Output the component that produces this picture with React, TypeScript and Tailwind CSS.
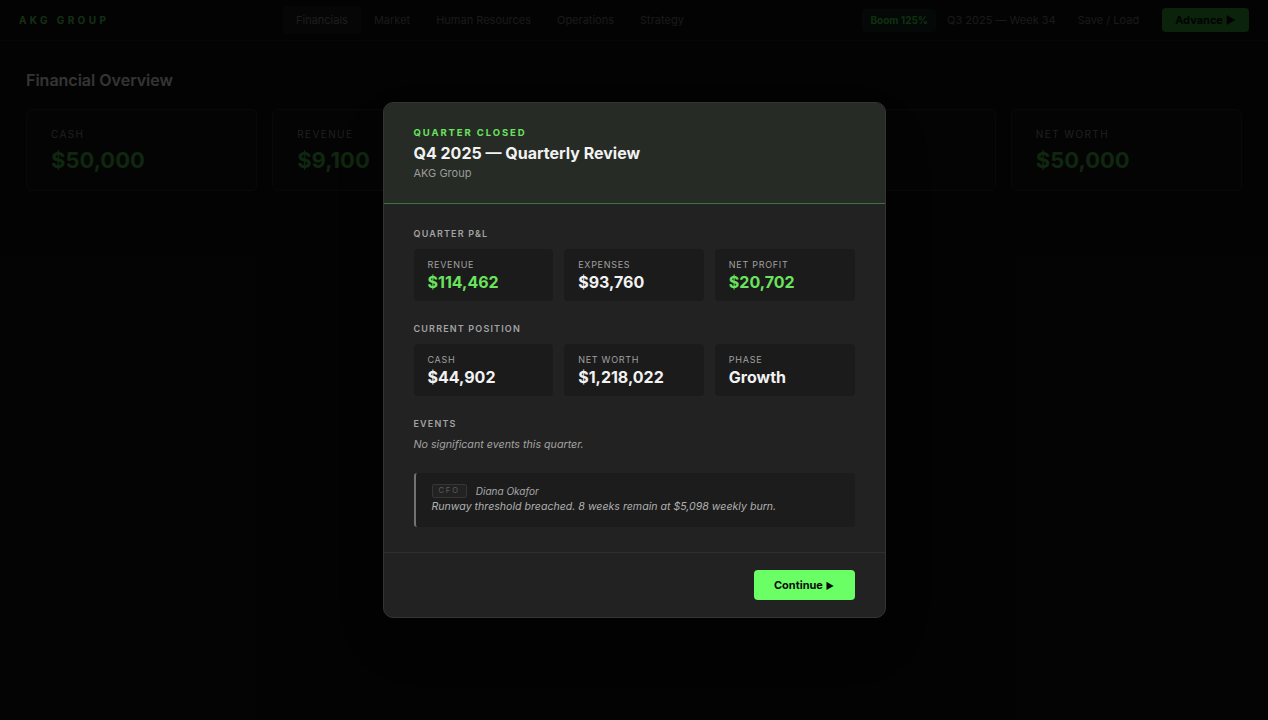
const NAV = ['Financials', 'Market', 'Human Resources', 'Operations', 'Strategy']

// cards 3 and 4 sit under the modal, so they carry no text
const TOP_CARDS = [
  { label: 'CASH', value: '$50,000' },
  { label: 'REVENUE', value: '$9,100' },
  { label: '', value: '' },
  { label: '', value: '' },
  { label: 'NET WORTH', value: '$50,000' },
]

const PNL = [
  { label: 'REVENUE', value: '$114,462', green: true },
  { label: 'EXPENSES', value: '$93,760', green: false },
  { label: 'NET PROFIT', value: '$20,702', green: true },
]

const POSITION = [
  { label: 'CASH', value: '$44,902' },
  { label: 'NET WORTH', value: '$1,218,022' },
  { label: 'PHASE', value: 'Growth' },
]

function StatBox({ label, value, green }: { label: string; value: string; green?: boolean }) {
  return (
    <div className="rounded-[4px] bg-[#1b1b1b] px-[14px] py-[9px]">
      <div className="text-[9px] leading-[14px] tracking-[0.08em] text-[#a0a0a0]">{label}</div>
      <div className={`text-[16px] font-bold leading-[20px] ${green ? 'text-[#6ae35e]' : 'text-[#f2f2f2]'}`}>
        {value}
      </div>
    </div>
  )
}

function SectionLabel({ children }: { children: React.ReactNode }) {
  return (
    <div className="text-[9px] font-semibold leading-[15px] tracking-[0.13em] text-[#a3a3a3]">{children}</div>
  )
}

export default function App() {
  return (
    <div className="relative h-[720px] w-full overflow-hidden bg-[#0e0e0e] font-['Inter',sans-serif]">
      {/* Page underneath */}
      <header className="flex h-[41px] items-center border-b border-[#1c1c1c] bg-[#0e0e0e] px-[19px]">
        <div className="w-[264px] text-[10px] font-bold tracking-[0.34em] text-[#4fbf4f]">AKG GROUP</div>
        <nav className="flex items-center">
          {NAV.map((n, i) => (
            <div
              key={n}
              className={`rounded-[4px] px-[13px] py-[6px] text-[11px] ${
                i === 0 ? 'bg-[#181818] text-[#747474]' : 'text-[#646464]'
              }`}
            >
              {n}
            </div>
          ))}
        </nav>
        <div className="ml-auto flex items-center">
          <div className="rounded-[4px] bg-[#11221a] px-[8px] py-[4px] text-[10px] font-bold text-[#3fbf3f]">
            Boom 125%
          </div>
          <div className="ml-[11px] text-[11px] text-[#646464]">Q3 2025 — Week 34</div>
          <div className="ml-[22px] text-[11px] text-[#646464]">Save / Load</div>
          <button className="ml-[23px] rounded-[4px] bg-[#2a8a2a] px-[13px] py-[4px] text-[11px] font-bold text-[#0a0a0a]">
            Advance ▶
          </button>
        </div>
      </header>

      <main className="px-[26px] pt-[27px]">
        <h1 className="text-[16px] font-semibold leading-[24px] text-[#cfcfcf]">Financial Overview</h1>
        <div className="mt-[17px] grid grid-cols-5 gap-[15px]">
          {TOP_CARDS.map((c, i) => (
            <div key={i} className="h-[82px] rounded-[6px] border border-[#242424] bg-[#121212] px-[24px] pt-[17px]">
              <div className="h-[14px] text-[10px] leading-[14px] tracking-[0.14em] text-[#7a7a7a]">{c.label}</div>
              <div className="mt-[4px] h-[30px] text-[22px] font-bold leading-[30px] text-[#3e9a3e]">{c.value}</div>
            </div>
          ))}
        </div>
      </main>

      {/* Overlay */}
      <div className="absolute inset-0 flex items-center justify-center bg-black/75">
        <div className="w-[503px] overflow-hidden rounded-[10px] border border-[#343434] bg-[#222222] shadow-2xl">
          <div className="border-b border-[#3d7340] bg-[#262b26] px-[30px] py-[22px]">
            <div className="text-[9.5px] font-bold leading-[15px] tracking-[0.2em] text-[#6ae35e]">QUARTER CLOSED</div>
            <div className="mt-[1px] text-[16px] font-bold leading-[24px] text-[#f2f2f2]">
              Q4 2025 — Quarterly Review
            </div>
            <div className="text-[11px] leading-[16px] text-[#9a9a9a]">AKG Group</div>
          </div>

          <div className="border-b border-[#2f2f2f] px-[30px] pb-[25px] pt-[22px]">
            <SectionLabel>QUARTER P&amp;L</SectionLabel>
            <div className="mt-[8px] grid grid-cols-3 gap-[11px]">
              {PNL.map((s) => (
                <StatBox key={s.label} {...s} />
              ))}
            </div>

            <div className="mt-[20px]">
              <SectionLabel>CURRENT POSITION</SectionLabel>
            </div>
            <div className="mt-[8px] grid grid-cols-3 gap-[11px]">
              {POSITION.map((s) => (
                <StatBox key={s.label} {...s} />
              ))}
            </div>

            <div className="mt-[20px]">
              <SectionLabel>EVENTS</SectionLabel>
            </div>
            <div className="mt-[5px] text-[10.7px] italic leading-[18px] text-[#a3a3a3]">
              No significant events this quarter.
            </div>

            <div className="mt-[19px] rounded-r-[4px] rounded-l-[3px] border-l-2 border-[#727272] bg-[#1c1c1c] pb-[12px] pl-[16px] pt-[10px]">
              <div className="flex items-center leading-[16px]">
                <span className="rounded-[2px] border border-[#363636] bg-[#222222] px-[6px] text-[7.5px] leading-[12px] tracking-[0.25em] text-[#5c5c5c]">
                  CFO
                </span>
                <span className="ml-[9px] text-[10px] italic text-[#a8a8a8]">Diana Okafor</span>
              </div>
              <div className="text-[10.6px] italic leading-[16px] text-[#b0b0b0]">
                Runway threshold breached. 8 weeks remain at $5,098 weekly burn.
              </div>
            </div>
          </div>

          <div className="flex justify-end px-[30px] py-[17px]">
            <button className="h-[30px] w-[101px] rounded-[4px] bg-[#6bff66] text-[11px] font-bold text-[#0a0a0a]">
              Continue <span className="text-[9px]">▶</span>
            </button>
          </div>
        </div>
      </div>
    </div>
  )
}
